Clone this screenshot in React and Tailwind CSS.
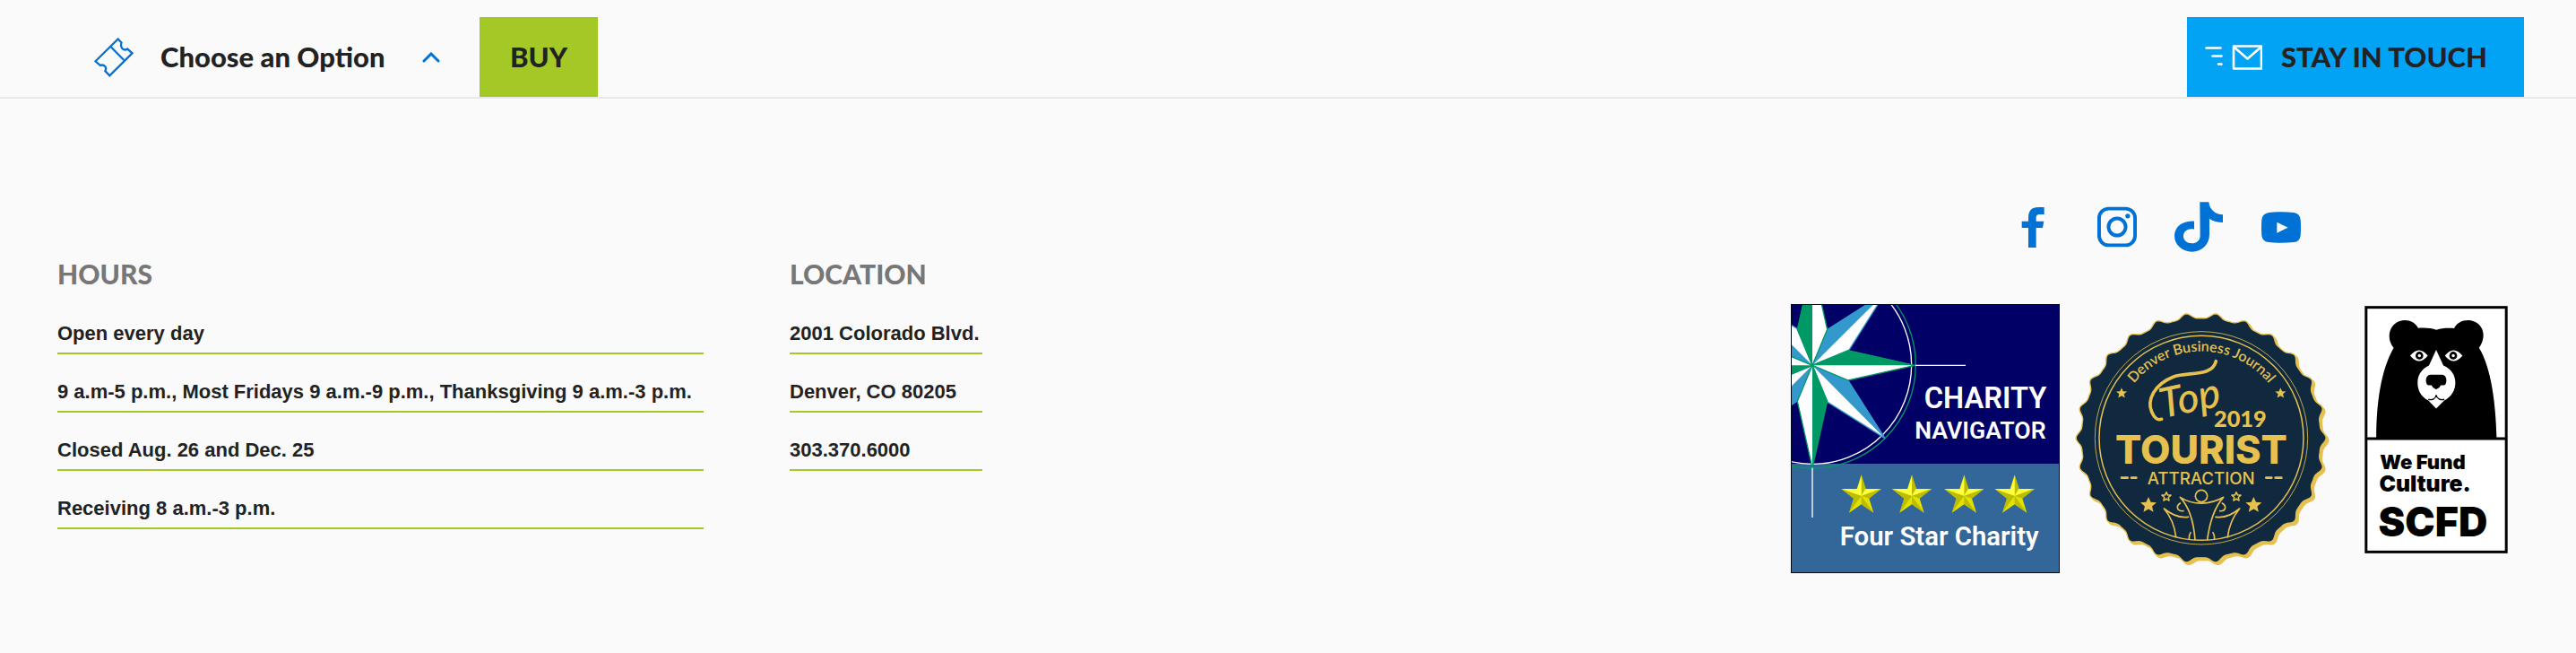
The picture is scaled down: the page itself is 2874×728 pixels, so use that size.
import React from "react";

const hours = [
  "Open every day",
  "9 a.m-5 p.m., Most Fridays 9 a.m.-9 p.m., Thanksgiving 9 a.m.-3 p.m.",
  "Closed Aug. 26 and Dec. 25",
  "Receiving 8 a.m.-3 p.m.",
];
const place = ["2001 Colorado Blvd.", "Denver, CO 80205", "303.370.6000"];

function TicketIcon() {
  return (
    <svg viewBox="0 0 44 44" className="h-11 w-11 shrink-0" fill="none" stroke="#0072d6" strokeWidth="2.3" aria-hidden="true">
      <path d="M26.7 1.500 L30.500 5.500 C29 10 31.500 15.500 37.300 12.600 L42.500 17.300 L17.300 42.300 L12.300 37 C14.500 33.500 12 29.500 6.700 30.800 L1.500 26.300 Z" />
      <path d="M18.700 10.300 L33.300 25" />
    </svg>
  );
}

function ChevronUp() {
  return (
    <svg viewBox="0 0 20 12" className="h-3 w-5 shrink-0" fill="none" stroke="#0072d6" strokeWidth="3" strokeLinecap="round" aria-hidden="true">
      <path d="M2 10 L10 2 L18 10" />
    </svg>
  );
}

function MailIcon() {
  return (
    <svg viewBox="0 0 64 28" className="h-7 w-16 shrink-0" fill="none" stroke="#fff" strokeWidth="2.6" strokeLinecap="round" strokeLinejoin="round" aria-hidden="true">
      <path d="M1.500 3.500 H17.500 M8.500 12.500 H18.500 M15 21.500 H18.500" />
      <rect x="32" y="1.500" width="31" height="25" />
      <path d="M32.500 2.500 L47.500 15.500 L62.500 2.500" />
    </svg>
  );
}

function Social() {
  const link = "flex h-14 items-center justify-center";
  return (
    <nav aria-label="Social media" className="flex items-center justify-center text-[#0072d6]">
      <a href="#facebook" aria-label="Facebook" className={link}>
        <svg viewBox="166 90 76 135" className="h-[45px] w-[26px]" fill="currentColor">
          <path d="M189 225 V159 H167 V137 H189 V125 C189 101 201 90 222 90 H242 V114 H228 C218 114 215 118 215 127 V137 H241 L237 159 H215 V225 Z" />
        </svg>
      </a>
      <a href="#instagram" aria-label="Instagram" className={link + " ml-[58px]"}>
        <svg viewBox="415 89 138 140" className="h-[46px] w-[46px]" fill="none" stroke="currentColor" strokeWidth="12">
          <rect x="423" y="97" width="122" height="124" rx="32" />
          <circle cx="484" cy="159" r="29" />
          <circle cx="520" cy="122" r="8" fill="currentColor" stroke="none" />
        </svg>
      </a>
      <a href="#tiktok" aria-label="TikTok" className={link + " ml-[41px]"}>
        <svg viewBox="678 76 162 166" className="h-14 w-[54px]" fill="currentColor">
          <path d="M763 76 H793 C795 101 815 118 840 118 V144 C823 144 807 140 795 131 V184 C795 219 769 242 737 242 C705 242 678 219 678 189 C678 158 706 138 744 140 V167 C724 163 708 173 708 190 C708 204 720 214 736 214 C752 214 764 204 764 188 Z" />
        </svg>
      </a>
      <a href="#youtube" aria-label="YouTube" className={link + " ml-[43px]"}>
        <svg viewBox="969 107 132 105" className="h-[35px] w-11" fill="currentColor">
          <path fillRule="evenodd" d="M994 110 Q1035 105 1078 110 Q1098 113 1100 134 Q1102 160 1100 187 Q1097 207 1078 209 Q1035 214 994 209 Q973 207 970 187 Q968 160 970 134 Q972 113 994 110 Z M1021 142 V178 L1058 160 Z" />
        </svg>
      </a>
    </nav>
  );
}

function GoldStar({ x }) {
  return (
    <g transform={`translate(${x} 698)`}>
      <path fill="#e2e200" d="M0 -70 L15 -23 L67 -23 L26 9 L41 57 L0 29 L-41 57 L-26 9 L-67 -23 L-15 -23 Z" />
      <path fill="#a3a300" d="M0 0 L0 -70 L15 -23 Z M0 0 L67 -23 L26 9 Z M0 0 L41 57 L0 29 Z M0 0 L-41 57 L-26 9 Z M0 0 L-67 -23 L-26 9 Z" opacity=".6" />
      <path fill="#ffff3c" d="M0 0 L0 -66 L-13 -22 Z M0 0 L-64 -22 L-13 -22 Z M0 0 L60 -22 L13 -22 Z" />
    </g>
  );
}

function CharityNavigator() {
  const sides = [0, 90, 180, 270];
  return (
    <svg viewBox="54 57 900 900" className="h-[300px] w-[300px]" role="img" aria-label="Charity Navigator Four Star Charity">
      <defs>
        <clipPath id="cn">
          <rect x="57" y="60" width="894" height="894" />
        </clipPath>
      </defs>
      <rect x="54" y="57" width="900" height="900" fill="#000814" />
      <g clipPath="url(#cn)">
        <rect x="57" y="60" width="894" height="531" fill="#000066" />
        <rect x="57" y="591" width="894" height="363" fill="#336699" />
        <circle cx="126" cy="260" r="346" fill="none" stroke="#009966" strokeWidth="4" />
        <circle cx="126" cy="260" r="332" fill="none" stroke="#fff" strokeWidth="4" />
        <path d="M470 262 H639 M126 604 V771" stroke="#fff" strokeWidth="4" />
        {sides.map((a) => (
          <g key={a} transform={`translate(126 262) rotate(${a})`}>
            <path d="M0 0 L48 -118 L244 -243 L122 -50 Z" fill="#fff" stroke="#3399cc" strokeWidth="4" />
            <path d="M0 0 L48 -118 L244 -243 Z" fill="#3399cc" />
          </g>
        ))}
        {sides.map((a) => (
          <g key={a} transform={`translate(126 262) rotate(${a})`}>
            <path d="M0 0 L-50 -120 L0 -343 L50 -120 Z" fill="#fff" stroke="#009966" strokeWidth="4" />
            <path d="M0 0 L-50 -120 L0 -343 Z" fill="#009966" />
          </g>
        ))}
      </g>
      {[290, 459, 634, 803].map((x) => (
        <GoldStar key={x} x={x} />
      ))}
      <g fill="#fff" fontFamily="Roboto,sans-serif" fontWeight="600" textAnchor="end">
        <text x="910" y="406" fontSize="98">CHARITY</text>
        <text x="908" y="508" fontSize="80">NAVIGATOR</text>
        <text x="884" y="864" fontSize="88">Four Star Charity</text>
      </g>
    </svg>
  );
}

function sealPath(cx, cy) {
  let d = "";
  for (let i = 0; i < 520; i++) {
    const t = (i / 520) * Math.PI * 2;
    const c = Math.cos(26 * t);
    const r = 407 + 9 * c + 2.5 * Math.cos(52 * t);
    d += (i ? "L" : "M") + (cx + r * Math.cos(t)).toFixed(1) + " " + (cy + r * Math.sin(t)).toFixed(1);
  }
  return d + "Z";
}

const STAR = "M0 -10 L2.900 -3.500 L10 -3.100 L4.500 1.700 L6.200 8.700 L0 4.900 L-6.200 8.700 L-4.500 1.700 L-10 -3.100 L-2.900 -3.500 Z";

function TouristSeal() {
  const gold = "#e6c14f";
  return (
    <svg viewBox="45 48 855 855" className="h-[285px] w-[285px]" role="img" aria-label="Denver Business Journal Top Tourist Attraction 2019">
      <defs>
        <path id="arc" d="M178 472 A290 290 0 0 1 758 472" />
      </defs>
      <path d={sealPath(475, 480)} fill={gold} stroke={gold} strokeWidth="4" />
      <path d={sealPath(467, 472)} fill="#10293e" stroke={gold} strokeWidth="4" />
      <g fill="none" stroke={gold}>
        <circle cx="468" cy="472" r="356" strokeWidth="2.500" />
        <circle cx="468" cy="472" r="342" strokeWidth="4.500" />
      </g>
      <g fill={gold}>
        <text fontFamily="Lato,sans-serif" fontWeight="600" fontSize="48" textAnchor="middle">
          <textPath href="#arc" startOffset="50%">Denver Business Journal</textPath>
        </text>
        <path d={STAR} transform="translate(201 322) scale(1.800)" />
        <path d={STAR} transform="translate(733 322) scale(1.800)" />
        <path d={STAR} transform="translate(291 696) scale(2.700)" />
        <path d={STAR} transform="translate(643 696) scale(2.700)" />
        <text x="338" y="406" fontFamily="Lato,sans-serif" fontStyle="italic" fontWeight="500" fontSize="138" transform="rotate(-12 338 406)">Top</text>
        <text x="598" y="436" fontFamily="Lato,sans-serif" fontWeight="900" fontSize="76" textAnchor="middle">2019</text>
        <text x="468" y="558" fontFamily="Inter,sans-serif" fontWeight="800" fontSize="130" textAnchor="middle">TOURIST</text>
        <text x="467" y="626" fontFamily="Inter,sans-serif" fontWeight="500" fontSize="56" textAnchor="middle">ATTRACTION</text>
      </g>
      <g fill="none" stroke={gold} strokeWidth="5" strokeLinecap="round" strokeLinejoin="round">
        <path d="M517 215 C505 268 425 250 375 267 C310 293 285 345 302 385 C312 408 322 413 335 409" strokeWidth="11" />
        <path d="M201 605 H221 M234 605 H250 M685 605 H703 M716 605 H736" strokeWidth="8" />
        <path d={STAR} transform="translate(351 668) scale(1.500)" strokeWidth="3" />
        <path d={STAR} transform="translate(585 668) scale(1.500)" strokeWidth="3" />
        <circle cx="468" cy="666" r="20" />
        <path d="M447 812 C443 760 430 705 397 670 C440 697 496 697 542 670 C510 705 495 760 488 812" />
        <path d="M397 690 C382 700 386 718 408 716 M538 690 C554 700 550 718 530 716" />
        <path d="M383 803 C378 760 362 730 343 708 C370 730 398 740 424 736 M556 803 C561 760 578 730 596 708 C570 730 542 740 516 736" />
        <path d="M432 788 Q426 798 427 810 M507 788 Q513 798 512 810" />
      </g>
    </svg>
  );
}

function Scfd() {
  return (
    <svg viewBox="84 64 478 826" className="h-[276px] w-40" role="img" aria-label="We Fund Culture. SCFD">
      <rect x="89" y="69" width="468" height="816" fill="#fff" stroke="#000" strokeWidth="9" />
      <path d="M89 507 H557" stroke="#000" strokeWidth="9" />
      <path d="M123 507 C123 390 138 280 181 204 C151 166 171 113 218 112 C238 112 254 122 263 138 C285 136 308 138 324 144 C342 138 362 137 383 139 C391 122 408 112 430 112 C478 114 496 164 466 204 C507 270 522 390 525 507 Z" />
      <g fill="#fff">
        <path d="M323 211 L347 263 C374 274 387 296 387 320 C387 348 372 368 350 380 L323 407 L297 380 C274 368 261 348 261 320 C261 295 275 274 299 263 Z" />
        <path d="M236 230 Q266 194 295 230 Q266 266 236 230 Z M352 230 Q381 194 411 230 Q381 266 352 230 Z" />
      </g>
      <circle cx="267" cy="230" r="13" />
      <circle cx="380" cy="230" r="13" />
      <circle cx="267" cy="230" r="5" fill="#fff" />
      <circle cx="380" cy="230" r="5" fill="#fff" />
      <path d="M302 294 H344 C358 296 360 316 354 326 C348 332 342 326 337 330 C335 338 328 338 323 343 C318 338 311 338 309 330 C304 326 298 332 292 326 C286 314 289 296 302 294 Z" />
      <path d="M297 376 C309 380 322 374 323 361 C325 374 338 380 350 376" fill="none" stroke="#000" strokeWidth="4" />
      <g fontFamily="Inter,sans-serif" fontWeight="900">
        <text x="135" y="610" fontSize="66">We Fund</text>
        <text x="133" y="685" fontSize="74">Culture.</text>
        <text x="130" y="834" fontSize="134">SCFD</text>
      </g>
    </svg>
  );
}

function InfoList({ title, items, width }) {
  return (
    <section className={width}>
      <h2 className="font-['Lato',sans-serif] text-[30px] leading-7 font-black text-[#777]">{title}</h2>
      <ul className="mt-9 flex flex-col gap-[25px]">
        {items.map((item) => (
          <li key={item} className="border-b-2 border-[#a4c926] pb-1 text-[22px] leading-[34px] font-bold whitespace-nowrap">
            {item}
          </li>
        ))}
      </ul>
    </section>
  );
}

export default function App() {
  return (
    <div className="min-h-screen bg-[#fafafa] font-['Liberation_Sans',Arial,sans-serif] text-[#222]">
      <header className="flex items-stretch border-b-2 border-[#e8e8e8] pt-[19px] pr-[58px] pl-[105px] font-['Lato',sans-serif] text-[31px] leading-[89px] font-black">
        <button type="button" aria-expanded="true" className="flex w-[430px] items-center pr-11 text-left">
          <TicketIcon />
          <span className="ml-[30px] flex-1">Choose an Option</span>
          <ChevronUp />
        </button>
        <button type="button" className="w-[132px] bg-[#a4c926] text-center">BUY</button>
        <button type="button" className="ml-auto flex w-[376px] items-center gap-[21px] bg-[#02a3f5] pl-5 whitespace-nowrap">
          <MailIcon />
          <span>STAY IN TOUCH</span>
        </button>
      </header>
      <footer className="flex items-start justify-between pr-[50px] pl-16">
        <div className="flex gap-24 pt-[181px]">
          <InfoList title="HOURS" items={hours} width="min-w-[721px]" />
          <InfoList title="LOCATION" items={place} width="min-w-[215px]" />
        </div>
        <div className="pt-[115px]">
          <Social />
          <div className="mt-[58px] flex items-start pr-[26px]">
            <a href="#charity-navigator"><CharityNavigator /></a>
            <a href="#top-tourist-attraction" className="mt-2 ml-[17px]"><TouristSeal /></a>
            <a href="#scfd" className="mt-[2px] ml-[38px]"><Scfd /></a>
          </div>
        </div>
      </footer>
    </div>
  );
}
